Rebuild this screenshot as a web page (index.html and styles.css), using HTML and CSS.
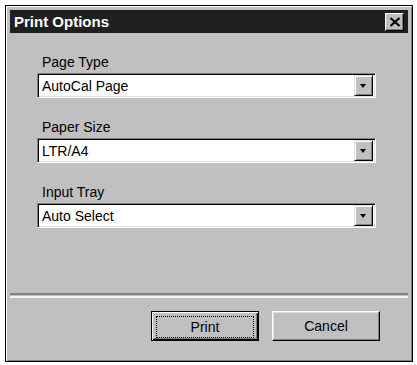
FILE: index.html
```html
<!DOCTYPE html>
<html>
<head>
<meta charset="utf-8">
<title>Print Options</title>
<link rel="stylesheet" href="styles.css">
</head>
<body>
<div class="m-dlg">
	<div class="title">
		<span>Print Options</span>
		<span class="close"><svg width="12" height="10" viewBox="0 0 12 10"><path d="M1.5 1l9 8M10.5 1l-9 8" stroke="#000" stroke-width="2.2" fill="none"/></svg></span>
	</div>
	<div class="form">
		<div class="field">
			<label>Page Type</label>
			<div class="combo"><span>AutoCal Page</span><i></i></div>
		</div>
		<div class="field">
			<label>Paper Size</label>
			<div class="combo"><span>LTR/A4</span><i></i></div>
		</div>
		<div class="field">
			<label>Input Tray</label>
			<div class="combo"><span>Auto Select</span><i></i></div>
		</div>
	</div>
	<div class="sep"></div>
	<div class="btns">
		<button class="btn def"><span>Print</span></button>
		<button class="btn">Cancel</button>
	</div>
</div>
</body>
</html>
```

FILE: styles.css
```css
*{margin:0;padding:0;}
body{background:#fff;font:14px "Liberation Sans",Arial,sans-serif;color:#000;}

/** 窗口 **/
.m-dlg{margin:5px 0 0 5px;width:408px;height:357px;box-sizing:border-box;padding:4px;border:1px solid #000;background:#c0c0c0;box-shadow:inset 1px 1px #fff,inset -1px -1px #808080;display:flex;flex-direction:column;}
.m-dlg .title{height:23px;background:#1f1f1f;color:#fff;font-weight:bold;font-size:15px;display:flex;align-items:center;justify-content:space-between;padding:0 4px 0 4px;}
.m-dlg .close{width:19px;height:18px;box-sizing:border-box;background:#c0c0c0;border:1px solid;border-color:#fff #000 #000 #fff;box-shadow:inset -1px -1px #808080;display:flex;align-items:center;justify-content:center;}

/** 表单 **/
.m-dlg .form{flex:1;padding:21px 32px 0 27px;display:flex;flex-direction:column;gap:21px;}
.m-dlg .field label{display:block;height:16px;line-height:16px;margin:0 0 3px 5px;}
.m-dlg .combo{height:25px;box-sizing:border-box;background:#fff;border:1px solid;border-color:#808080 #fff #fff #808080;box-shadow:inset 1px 1px #000,inset -1px -1px #dfdfdf;display:flex;align-items:center;padding:2px 2px 2px 4px;}
.m-dlg .combo span{flex:1;}
.m-dlg .combo i{width:19px;height:21px;box-sizing:border-box;background:#c0c0c0;border:1px solid;border-color:#dfdfdf #000 #000 #dfdfdf;box-shadow:inset 1px 1px #fff,inset -1px -1px #808080;position:relative;}
.m-dlg .combo i:after{content:'';position:absolute;left:5px;top:8px;border:3px solid transparent;border-top:4px solid #000;border-bottom:0;}

/** 分隔线与按钮 **/
.m-dlg .sep{height:1px;border-top:2px solid #808080;border-bottom:2px solid #f4f4f4;}
.m-dlg .btns{display:flex;justify-content:flex-end;gap:13px;padding:13px 28px 16px 0;}
.m-dlg .btn{width:108px;height:30px;box-sizing:border-box;font:14px "Liberation Sans",Arial,sans-serif;background:#c0c0c0;border:1px solid;border-color:#fff #000 #000 #fff;box-shadow:inset -1px -1px #808080,inset 1px 1px #dfdfdf;}
.m-dlg .btn.def{border:1px solid #000;box-shadow:inset 1px 1px #fff,inset -1px -1px #000,inset -2px -2px #808080;padding:4px;}
.m-dlg .btn.def span{display:flex;align-items:center;justify-content:center;height:100%;border:1px dotted #000;}
```
